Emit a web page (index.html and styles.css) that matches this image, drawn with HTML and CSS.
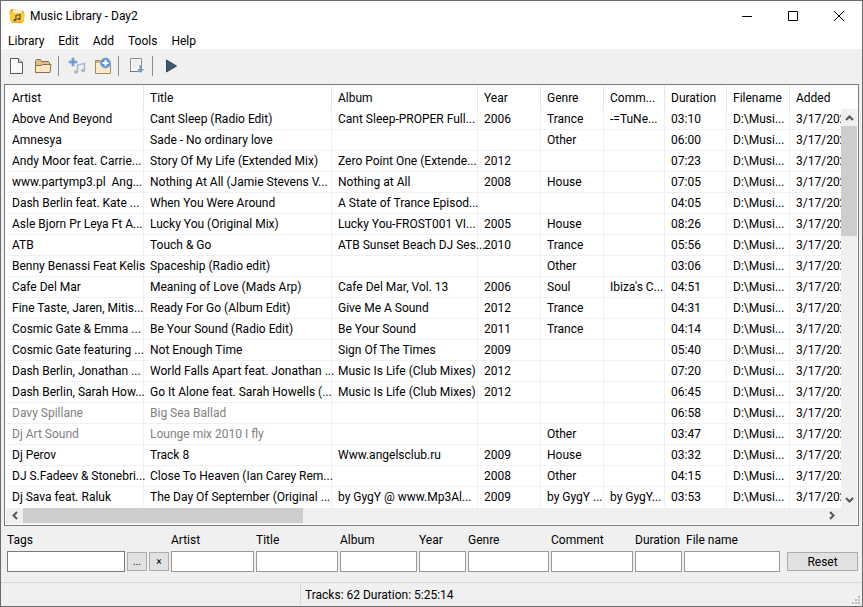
FILE: index.html
```
<!DOCTYPE html>
<html lang="en">
<head>
    <meta charset="UTF-8">
    <title>Music Library - Day2</title>
    <link rel="stylesheet" href="styles.css">
</head>
<body>
    <div class="window">
        <header class="titlebar">
            <svg class="app-icon" width="16" height="16" viewBox="0 0 16 16">
                <path d="M1 2.500L2.500 1h4l1.500 1.500h6L15 4v9l-2 2H3l-2-3z" fill="#f5a81c"/>
                <path d="M4 1.500h9v4H4z" fill="#fff3c4"/>
                <path d="M0 3l4 2h11l1 2-1.500 6.500L3 14 1.500 12z" fill="#fdc93a"/>
                <path d="M7 12V7.500l4-1V11" fill="none" stroke="#5b5640" stroke-width="1.200"/>
                <ellipse cx="6" cy="12" rx="1.500" ry="1.200" fill="#5b5640"/>
                <ellipse cx="10" cy="11" rx="1.500" ry="1.200" fill="#5b5640"/>
            </svg>
            <h1>Music Library - Day2</h1>
            <div class="window-buttons">
                <button type="button" aria-label="Minimize"><svg width="10" height="10" viewBox="0 0 10 10"><path d="M0 5.500h10"/></svg></button>
                <button type="button" aria-label="Maximize"><svg width="10" height="10" viewBox="0 0 10 10"><path d="M.5.5h9v9h-9z"/></svg></button>
                <button type="button" aria-label="Close"><svg width="10" height="10" viewBox="0 0 10 10"><path d="M0 0l10 10M10 0L0 10"/></svg></button>
            </div>
        </header>

        <nav class="menubar">
            <button type="button">Library</button>
            <button type="button">Edit</button>
            <button type="button">Add</button>
            <button type="button">Tools</button>
            <button type="button">Help</button>
        </nav>

        <div class="toolbar">
            <button type="button" aria-label="New library">
                <svg width="18" height="18" viewBox="0 0 18 18">
                    <path d="M2.500 1.500h8l4 4v11h-12z" fill="#fafafa" stroke="#5a5a5a"/>
                    <path d="M10.500 1.500v4h4" fill="#ddd" stroke="#5a5a5a"/>
                </svg>
            </button>
            <button type="button" aria-label="Open library">
                <svg width="18" height="18" viewBox="0 0 18 18">
                    <path d="M1.500 15.500v-12l1-1h4l1 2h7l1 1v2" fill="#e3bd86" stroke="#8a7048"/>
                    <path d="M1.500 15.500v-7h6l1-1h8.500l-1 8z" fill="#fde6c0" stroke="#8a7048"/>
                </svg>
            </button>
            <span class="separator"></span>
            <button type="button" aria-label="Add tracks">
                <svg width="18" height="18" viewBox="0 0 18 18">
                    <path d="M4 1h2v3h3v2H6v3H4V6H1V4h3z" fill="#5d8fd0" stroke="#8db0de"/>
                    <path d="M9.500 15V8l7-1.500v7" fill="none" stroke="#a9b7c6" stroke-width="1.500"/>
                    <ellipse cx="8" cy="15" rx="2" ry="1.700" fill="#a9b7c6"/>
                    <ellipse cx="15" cy="13.500" rx="2" ry="1.700" fill="#a9b7c6"/>
                </svg>
            </button>
            <button type="button" aria-label="Add folder">
                <svg width="18" height="18" viewBox="0 0 18 18">
                    <path d="M1.500 3.500h5l1.500 2h8.500v11h-15z" fill="#fde9c9" stroke="#a08b66"/>
                    <path d="M2 4h4.500l1 2H2z" fill="#d9b178"/>
                    <circle cx="11.500" cy="6" r="5" fill="#5c93dc" stroke="#86a9d8"/>
                    <path d="M11.500 3v6M8.500 6h6" stroke="#fff" stroke-width="2"/>
                </svg>
            </button>
            <span class="separator"></span>
            <button type="button" aria-label="Save list">
                <svg width="18" height="18" viewBox="0 0 18 18">
                    <path d="M2.500 1.500h11v13h-11z" fill="#fafafa" stroke="#8c8c8c"/>
                    <path d="M4 4h8M4 6h8M4 8h8M4 10h5" stroke="#e2e2e2"/>
                    <path d="M11.500 8h2v4h2.500l-3.500 4-3.500-4h2.500z" fill="#6d9bd6"/>
                    <path d="M2 14.500h7" stroke="#777"/>
                </svg>
            </button>
            <span class="separator"></span>
            <button type="button" aria-label="Play">
                <svg width="18" height="18" viewBox="0 0 18 18"><path d="M4.500 3L14.500 9 4.500 15z" fill="#3c5a68" stroke="#2e4a5e"/></svg>
            </button>
        </div>

        <main class="list">
            <table class="tracks">
                <colgroup>
                    <col class="col-artist">
                    <col class="col-title">
                    <col class="col-album">
                    <col class="col-year">
                    <col class="col-genre">
                    <col class="col-comment">
                    <col class="col-duration">
                    <col class="col-filename">
                    <col>
                </colgroup>
                <thead>
                    <tr><th>Artist</th><th>Title</th><th>Album</th><th>Year</th><th>Genre</th><th>Comm...</th><th>Duration</th><th>Filename</th><th>Added</th></tr>
                </thead>
                <tbody>
                    <tr><td>Above And Beyond</td><td>Cant Sleep (Radio Edit)</td><td>Cant Sleep-PROPER Full...</td><td>2006</td><td>Trance</td><td>-=TuNe...</td><td>03:10</td><td>D:\Musi...</td><td>3/17/202</td></tr>
                    <tr><td>Amnesya</td><td>Sade - No ordinary love</td><td></td><td></td><td>Other</td><td></td><td>06:00</td><td>D:\Musi...</td><td>3/17/202</td></tr>
                    <tr><td>Andy Moor feat. Carrie...</td><td>Story Of My Life (Extended Mix)</td><td>Zero Point One (Extende...</td><td>2012</td><td></td><td></td><td>07:23</td><td>D:\Musi...</td><td>3/17/202</td></tr>
                    <tr><td>www.partymp3.pl  Ang...</td><td>Nothing At All (Jamie Stevens V...</td><td>Nothing at All</td><td>2008</td><td>House</td><td></td><td>07:05</td><td>D:\Musi...</td><td>3/17/202</td></tr>
                    <tr><td>Dash Berlin feat. Kate ...</td><td>When You Were Around</td><td>A State of Trance Episod...</td><td></td><td></td><td></td><td>04:05</td><td>D:\Musi...</td><td>3/17/202</td></tr>
                    <tr><td>Asle Bjorn Pr Leya Ft A...</td><td>Lucky You (Original Mix)</td><td>Lucky You-FROST001 VI...</td><td>2005</td><td>House</td><td></td><td>08:26</td><td>D:\Musi...</td><td>3/17/202</td></tr>
                    <tr><td>ATB</td><td>Touch &amp; Go</td><td>ATB Sunset Beach DJ Ses...</td><td>2010</td><td>Trance</td><td></td><td>05:56</td><td>D:\Musi...</td><td>3/17/202</td></tr>
                    <tr><td>Benny Benassi Feat Kelis</td><td>Spaceship (Radio edit)</td><td></td><td></td><td>Other</td><td></td><td>03:06</td><td>D:\Musi...</td><td>3/17/202</td></tr>
                    <tr><td>Cafe Del Mar</td><td>Meaning of Love (Mads Arp)</td><td>Cafe Del Mar, Vol. 13</td><td>2006</td><td>Soul</td><td>Ibiza's C...</td><td>04:51</td><td>D:\Musi...</td><td>3/17/202</td></tr>
                    <tr><td>Fine Taste, Jaren, Mitis...</td><td>Ready For Go (Album Edit)</td><td>Give Me A Sound</td><td>2012</td><td>Trance</td><td></td><td>04:31</td><td>D:\Musi...</td><td>3/17/202</td></tr>
                    <tr><td>Cosmic Gate &amp; Emma ...</td><td>Be Your Sound (Radio Edit)</td><td>Be Your Sound</td><td>2011</td><td>Trance</td><td></td><td>04:14</td><td>D:\Musi...</td><td>3/17/202</td></tr>
                    <tr><td>Cosmic Gate featuring ...</td><td>Not Enough Time</td><td>Sign Of The Times</td><td>2009</td><td></td><td></td><td>05:40</td><td>D:\Musi...</td><td>3/17/202</td></tr>
                    <tr><td>Dash Berlin, Jonathan ...</td><td>World Falls Apart feat. Jonathan ...</td><td>Music Is Life (Club Mixes)</td><td>2012</td><td></td><td></td><td>07:20</td><td>D:\Musi...</td><td>3/17/202</td></tr>
                    <tr><td>Dash Berlin, Sarah How...</td><td>Go It Alone feat. Sarah Howells (...</td><td>Music Is Life (Club Mixes)</td><td>2012</td><td></td><td></td><td>06:45</td><td>D:\Musi...</td><td>3/17/202</td></tr>
                    <tr><td class="missing">Davy Spillane</td><td class="missing">Big Sea Ballad</td><td></td><td></td><td></td><td></td><td>06:58</td><td>D:\Musi...</td><td>3/17/202</td></tr>
                    <tr><td class="missing">Dj Art Sound</td><td class="missing">Lounge mix 2010 I fly</td><td></td><td></td><td>Other</td><td></td><td>03:47</td><td>D:\Musi...</td><td>3/17/202</td></tr>
                    <tr><td>Dj Perov</td><td>Track 8</td><td>Www.angelsclub.ru</td><td>2009</td><td>House</td><td></td><td>03:32</td><td>D:\Musi...</td><td>3/17/202</td></tr>
                    <tr><td>DJ S.Fadeev &amp; Stonebri...</td><td>Close To Heaven (Ian Carey Rem...</td><td></td><td>2008</td><td>Other</td><td></td><td>04:15</td><td>D:\Musi...</td><td>3/17/202</td></tr>
                    <tr><td>Dj Sava feat. Raluk</td><td>The Day Of September (Original ...</td><td>by GygY @ www.Mp3Al...</td><td>2009</td><td>by GygY ...</td><td>by GygY...</td><td>03:53</td><td>D:\Musi...</td><td>3/17/202</td></tr>
                </tbody>
            </table>
            <div class="scroll-v">
                <button type="button" aria-label="Scroll up"><svg width="9" height="6" viewBox="0 0 9 6"><path d="M1 5l3.500-3.500L8 5"/></svg></button>
                <div class="track"><div class="thumb"></div></div>
                <button type="button" aria-label="Scroll down"><svg width="9" height="6" viewBox="0 0 9 6"><path d="M1 1l3.500 3.500L8 1"/></svg></button>
            </div>
            <div class="scroll-h">
                <button type="button" aria-label="Scroll left"><svg width="6" height="9" viewBox="0 0 6 9"><path d="M5 1L1.500 4.500 5 8"/></svg></button>
                <div class="track"><div class="thumb"></div></div>
                <button type="button" aria-label="Scroll right"><svg width="6" height="9" viewBox="0 0 6 9"><path d="M1 1l3.500 3.500L1 8"/></svg></button>
            </div>
        </main>

        <form class="filters">
            <div class="field"><label for="tags">Tags</label><input class="active" type="text" id="tags"></div>
            <button type="button" class="small">...</button>
            <button type="button" class="small">×</button>
            <div class="field"><label for="artist">Artist</label><input type="text" id="artist"></div>
            <div class="field"><label for="title">Title</label><input type="text" id="title"></div>
            <div class="field"><label for="album">Album</label><input type="text" id="album"></div>
            <div class="field"><label for="year">Year</label><input type="text" id="year"></div>
            <div class="field"><label for="genre">Genre</label><input type="text" id="genre"></div>
            <div class="field"><label for="comment">Comment</label><input type="text" id="comment"></div>
            <div class="field"><label for="duration">Duration</label><input type="text" id="duration"></div>
            <div class="field file"><label for="filename">File name</label><input type="text" id="filename"></div>
            <button type="reset" class="reset">Reset</button>
        </form>

        <footer class="statusbar">
            <span class="pane"></span>
            <span class="summary">Tracks: 62 Duration: 5:25:14</span>
            <svg class="grip" width="8" height="8" viewBox="0 0 8 8">
                <path d="M6 0h2v2H6zM3 3h2v2H3zM6 3h2v2H6zM0 6h2v2H0zM3 6h2v2H3zM6 6h2v2H6z" fill="#bfbfbf"/>
            </svg>
        </footer>
    </div>
</body>
</html>
```

FILE: styles.css
```
* {
    box-sizing: border-box;
}
body {
    margin: 0;
    background-color: #f0f0f0;
    color: #000;
    font-family: "Segoe UI", Roboto, "Noto Sans", sans-serif;
    font-size: 12px;
    line-height: 16px;
}
button, input {
    font: inherit;
    color: inherit;
    padding: 0;
    border: 0;
    border-radius: 0;
    background: none;
}
.window {
    display: flex;
    flex-direction: column;
    min-height: 100vh;
    border: 1px solid #6b6b6b;
}
.titlebar {
    display: flex;
    align-items: center;
    height: 30px;
    padding-left: 8px;
    background-color: #fff;
}
.titlebar h1 {
    flex: 1;
    margin: 0 0 0 5px;
    font-size: 12px;
    font-weight: normal;
}
.window-buttons {
    display: flex;
}
.window-buttons button {
    display: flex;
    align-items: center;
    justify-content: center;
    width: 46px;
    height: 30px;
}
.window-buttons path {
    fill: none;
    stroke: #000;
}
.menubar {
    display: flex;
    gap: 14px;
    height: 18px;
    padding: 2px 0 0 7px;
    background-color: #fff;
}
.toolbar {
    display: flex;
    align-items: center;
    height: 35px;
    padding: 0 0 2px 3px;
}
.toolbar button {
    display: flex;
    align-items: center;
    justify-content: center;
    width: 26px;
    height: 22px;
}
.separator {
    width: 1px;
    height: 20px;
    margin: 0 4px 0 2px;
    background-color: #8c8c8c;
}
.toolbar .separator + button {
    margin-left: 1px;
}

/* track list */
.list {
    display: grid;
    grid-template-columns: 1fr 16px;
    grid-template-rows: 23px 1fr 16px;
    margin: 0 3px;
    padding: 1px;
    border: 1px solid #7a7a7a;
    background-color: #fff;
}
.tracks {
    grid-area: 1 / 1 / 3 / 3;
    width: 100%;
    table-layout: fixed;
    border-collapse: separate;
    border-spacing: 0;
}
.col-artist { width: 138px; }
.col-title { width: 188px; }
.col-album { width: 146px; }
.col-year { width: 63px; }
.col-genre { width: 63px; }
.col-comment { width: 61px; }
.col-duration { width: 62px; }
.col-filename { width: 63px; }
.tracks th, .tracks td {
    height: 21px;
    padding: 0 0 0 6px;
    white-space: pre;
    text-align: left;
    font-weight: normal;
    border-right: 1px solid #f0f0f0;
    border-bottom: 1px solid #f0f0f0;
}
.tracks th {
    height: 23px;
    border-right-color: #e5e5e5;
    border-bottom: 0;
}
.tracks th:last-child, .tracks td:last-child {
    border-right: 0;
}
.tracks tr:last-child td {
    border-bottom-color: #fff;
}
.tracks .missing {
    color: #808080;
}
.scroll-v, .scroll-h {
    display: flex;
    background-color: #f0f0f0;
}
.scroll-v {
    grid-area: 2 / 2;
    flex-direction: column;
    z-index: 1;
}
.scroll-h {
    grid-area: 3 / 1 / 4 / 3;
    padding-right: 17px;
}
.scroll-v button, .scroll-h button {
    display: flex;
    align-items: center;
    justify-content: center;
    width: 16px;
    height: 17px;
}
.scroll-h button {
    width: 17px;
    height: 15px;
}
.scroll-v path, .scroll-h path {
    fill: none;
    stroke: #555;
    stroke-width: 2;
}
.track {
    flex: 1;
}
.thumb {
    background-color: #cdcdcd;
}
.scroll-v .thumb {
    height: 30%;
}
.scroll-h .thumb {
    width: 35%;
    height: 15px;
}

/* filter fields */
.filters {
    display: grid;
    grid-template-columns: 118fr 20px 20px 83fr 82fr 77fr 47fr 81fr 82fr 47fr 96fr 76px;
    column-gap: 2px;
    align-items: end;
    padding: 6px 4px 10px 6px;
}
.field {
    display: flex;
    flex-direction: column;
    gap: 3px;
    min-width: 0;
}
.field label {
    white-space: nowrap;
}
.field.file label {
    padding-left: 2px;
}
.field input {
    width: 100%;
    height: 21px;
    padding: 0 3px;
    border: 1px solid #999;
    background-color: #fff;
}
.field input.active {
    border-color: #7a7a7a;
}
.small, .reset {
    height: 19px;
    margin-bottom: 1px;
    border: 1px solid #adadad;
    background-color: #e1e1e1;
}
.small {
    font-size: 10px;
    line-height: 12px;
}
.reset {
    margin-left: 5px;
    font-size: 12px;
}
.statusbar {
    display: flex;
    flex: 1;
    align-items: center;
    padding-right: 2px;
    border-top: 1px solid #d7d7d7;
}
.pane {
    width: 300px;
    height: 21px;
    border-right: 1px solid #d7d7d7;
}
.summary {
    flex: 1;
    padding-left: 4px;
}
.grip {
    align-self: flex-end;
    margin-bottom: 2px;
}
```
